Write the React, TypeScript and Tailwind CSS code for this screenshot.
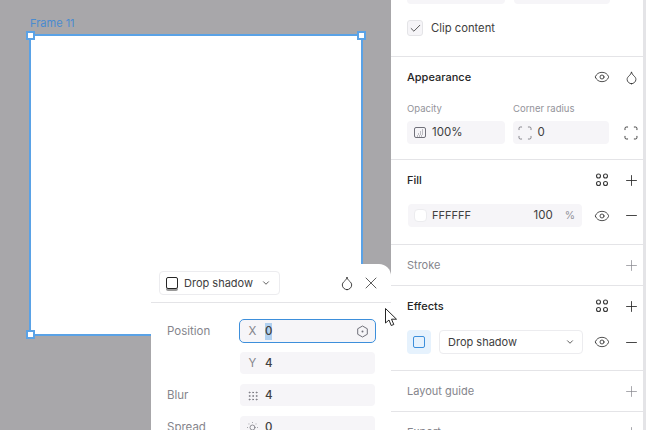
import { Check, ChevronDown, Eye, Minus, Plus, X, Droplet, Grip, SunDim, Scan } from "lucide-react";
import type { ReactNode } from "react";

function Styles() {
  return (
    <svg width="16" height="16" viewBox="0 0 16 16" fill="none" stroke="#3a3a3a" strokeWidth="1.1">
      <circle cx="4.5" cy="4" r="2" />
      <circle cx="11.5" cy="4" r="2" />
      <circle cx="4.5" cy="11.5" r="2" />
      <circle cx="11.5" cy="11.5" r="2" />
    </svg>
  );
}

function OpacityIcon() {
  return (
    <svg width="12" height="11" viewBox="0 0 12 11" fill="none" className="mr-[6px]">
      <rect x="0.5" y="0.5" width="11" height="10" rx="1.5" stroke="#71717a" />
      <path d="M8 3h1M6 5h1M8 5h1M4 7h1M6 7h1M8 7h1M3 9h6" stroke="#85858c" strokeWidth="1" strokeDasharray="1 1" />
    </svg>
  );
}

function OffsetIcon() {
  return (
    <svg width="13" height="13" viewBox="0 0 13 13" fill="none" stroke="#71717a" className="ml-auto mr-[6px]">
      <path d="M6.5 1l4.8 2.75v5.5L6.5 12 1.7 9.25v-5.5Z" strokeWidth="1" />
      <circle cx="6.5" cy="6.5" r="1" fill="#71717a" stroke="none" />
    </svg>
  );
}

function Handle({ className }: { className: string }) {
  return <div className={`absolute w-[9px] h-[9px] bg-white border-2 border-[#5aa2e6] ${className}`} />;
}

function Section({ title, muted, right, children }: { title: string; muted?: boolean; right?: ReactNode; children?: ReactNode }) {
  return (
    <div className="border-b border-[#e4e4e7] pl-4 pr-[3px]">
      <div className="h-10 flex items-center justify-between">
        <span className={muted ? "text-[11px] text-[#85858c]" : "text-[11px] font-medium text-[#262626] pt-px"}>{title}</span>
        {right ?? <Plus size={17} strokeWidth={1} color="#85858c" />}
      </div>
      {children}
    </div>
  );
}

function PopRow({ label, icon, value, focused }: { label?: string; icon: ReactNode; value: string; focused?: boolean }) {
  return (
    <div className="flex items-center h-[22px] mb-2.5">
      <span className="w-[73px] pt-px text-[11.5px] text-[#85858c]">{label}</span>
      <div className={`w-[135px] h-[22px] flex items-center rounded bg-[#f6f5f8] ${focused ? "outline outline-[#3d8fdb]" : ""}`}>
        <span className="w-[25px] pt-px flex justify-center text-[11.5px] text-[#85858c]">{icon}</span>
        <span className={`mt-px text-[11.5px] text-[#404040] font-medium ${focused ? "bg-[#b0d0f0]" : ""}`}>{value}</span>
        {focused && <OffsetIcon />}
      </div>
    </div>
  );
}

export default function App() {
  return (
    <div className="flex w-[646px] h-[430px] overflow-hidden bg-[#a8a7aa]" style={{ fontFamily: "Inter, sans-serif" }}>
      <div className="relative w-[391px] shrink-0">
        <div className="absolute left-[30px] top-[15px] text-[11px] text-[#4a8bd0]">Frame 11</div>
        <div className="absolute left-[29px] top-[34px] w-[334px] h-[302px] bg-white border-2 border-[#5aa2e6]" />
        <Handle className="left-[26px] top-[31px]" />
        <Handle className="left-[357px] top-[31px]" />
        <Handle className="left-[26px] top-[330px]" />

        <div className="absolute left-[151px] top-[264px] w-[240px] h-[180px] bg-white rounded-t-xl">
          <div className="h-[39px] flex items-center border-b border-[#e4e4e7] pl-2 pr-[10px]">
            <div className="w-[121px] h-[24px] flex items-center rounded border border-[#ececef] pl-1.5">
              <div className="w-3 h-3 rounded-[2px] border border-[#262626] shadow-[0_2px_0_#9a9a9a]" />
              <span className="ml-[6px] pt-px text-[11px] text-[#404040]">Drop shadow</span>
              <ChevronDown size={10} color="#404040" className="ml-2" />
            </div>
            <div className="ml-auto flex items-center gap-1.5">
              <Droplet size={16} strokeWidth={1.3} color="#262626" />
              <X size={20} strokeWidth={0.9} color="#262626" />
            </div>
          </div>
          <div className="pl-4 pt-[17px]">
            <PopRow label="Position" icon="X" value="0" focused />
            <PopRow icon="Y" value="4" />
            <PopRow label="Blur" icon={<Grip size={12} strokeWidth={1.5} color="#71717a" />} value="4" />
            <PopRow label="Spread" icon={<SunDim size={15} strokeWidth={1.2} color="#71717a" />} value="0" />
          </div>
        </div>

        <svg className="absolute left-[384px] top-[307px] z-10" width="15" height="21" viewBox="0 0 15 21" fill="white" stroke="#262626" strokeWidth="1">
          <path d="M1.5 1.5V16L5 13l2.2 5.5 2.6-1-2.3-5.3H12.5Z" />
        </svg>
      </div>

      <div className="w-[252px] shrink-0 bg-white text-[#262626]">
        <div className="border-b border-[#e4e4e7] h-[57px] pl-4">
          <div className="flex gap-[9px] h-[4px]">
            <div className="w-[98px] bg-[#f6f5f8] rounded-b" />
            <div className="w-[96px] bg-[#f6f5f8] rounded-b" />
          </div>
          <div className="flex items-center mt-[16px]">
            <div className="w-4 h-4 rounded-[3px] border border-[#e4e4e7] bg-[#f6f5f8] flex items-center justify-center">
              <Check size={13} strokeWidth={1.4} color="#262626" />
            </div>
            <span className="ml-2 text-[11.25px] text-[#404040]">Clip content</span>
          </div>
        </div>

        <div className="border-b border-[#e4e4e7] h-[103px] pl-4 pr-1">
          <div className="h-10 flex items-center justify-between">
            <span className="text-[11px] font-medium">Appearance</span>
            <div className="flex items-center gap-[14px]">
              <Eye size={16} strokeWidth={1.2} />
              <Droplet size={15} strokeWidth={1.3} color="#262626" />
            </div>
          </div>
          <div className="flex gap-2 mt-[5px] text-[9.5px] text-[#93939a]">
            <span className="w-[98px]">Opacity</span>
            <span>Corner radius</span>
          </div>
          <div className="flex items-center gap-2 mt-[5px]">
            <div className="w-[98px] h-[23px] rounded bg-[#f6f5f8] flex items-center pl-[7px] text-[11.5px] text-[#404040]">
              <OpacityIcon />
              100%
            </div>
            <div className="w-[97px] h-[23px] rounded bg-[#f6f5f8] flex items-center pl-1 text-[11.5px] text-[#404040]">
              <Scan size={16} strokeWidth={1} color="#52525b" className="mr-[5px]" />
              0
            </div>
            <Scan size={16} strokeWidth={1.3} className="ml-1.5" />
          </div>
        </div>

        <Section title="Fill" right={<div className="flex items-center gap-[13px]"><Styles /><Plus size={17} strokeWidth={1.2} /></div>}>
          <div className="flex items-center h-[23px] mb-[17px] mt-1">
            <div className="ml-px w-[174px] h-[23px] rounded bg-[#f6f5f8] flex items-center pl-1.5 text-[11px] text-[#404040]">
              <div className="w-[13px] h-[13px] rounded-sm bg-white border border-[#ececef] mr-[5px]" />
              <span>FFFFFF</span>
              <span className="ml-auto text-[11.5px]">100</span>
              <span className="ml-3 mr-[7px] text-[10.5px] text-[#93939a]">%</span>
            </div>
            <Eye size={16} strokeWidth={1.2} className="ml-3" />
            <Minus size={17} strokeWidth={1.2} className="ml-[13px]" />
          </div>
        </Section>

        <Section title="Stroke" muted />

        <Section title="Effects" right={<div className="flex items-center gap-[13px]"><Styles /><Plus size={17} strokeWidth={1.2} /></div>}>
          <div className="flex items-center h-[24px] mb-4 mt-1">
            <div className="w-6 h-6 rounded bg-[#e6f2fd] flex items-center justify-center">
              <div className="w-3 h-3 rounded-[2px] border border-[#3d8fdb]" />
            </div>
            <div className="ml-2 w-[144px] h-[24px] rounded border border-[#ececef] flex items-center pl-2 text-[11px] text-[#404040]">
              Drop shadow
              <ChevronDown size={10} className="ml-auto mr-[7px]" />
            </div>
            <Eye size={16} strokeWidth={1.2} className="ml-[11px]" />
            <Minus size={17} strokeWidth={1.2} className="ml-[13px]" />
          </div>
        </Section>

        <Section title="Layout guide" muted />
        <Section title="Export" muted />
      </div>
      <div className="flex-1 bg-[#e4e4e7]" />
    </div>
  );
}
